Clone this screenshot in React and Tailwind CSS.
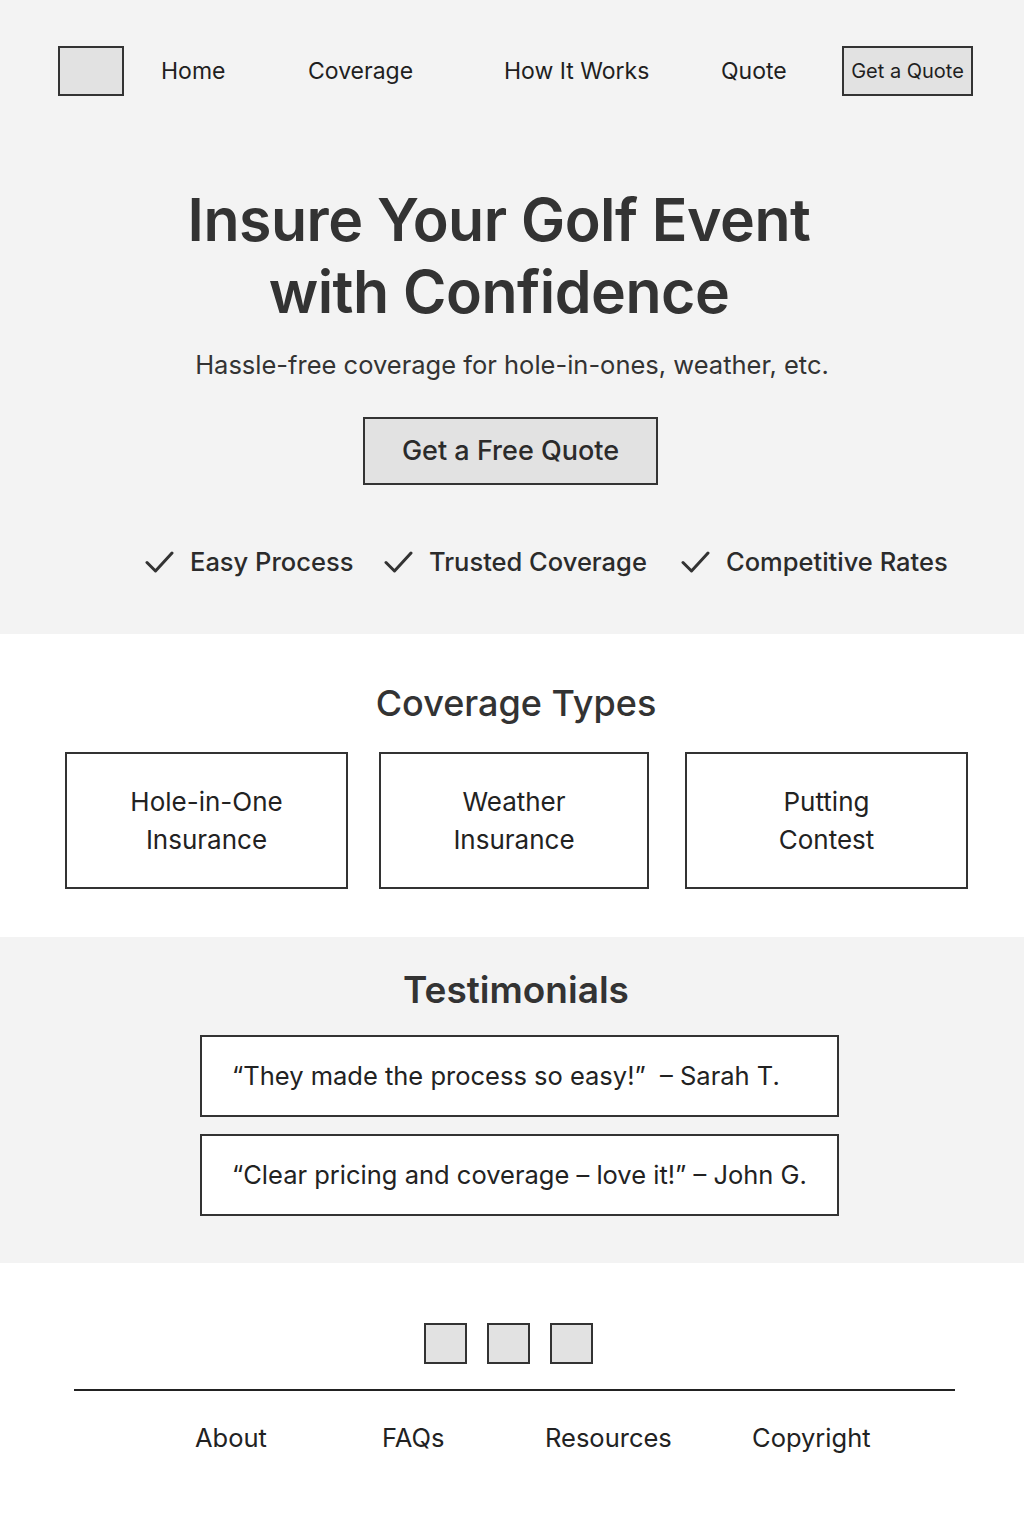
import React from 'react';

const NAV = [
  { label: 'Home', w: 'w-[147px]' },
  { label: 'Coverage', w: 'w-[196px]' },
  { label: 'How It Works', w: 'w-[217px]' },
  { label: 'Quote', w: 'w-[121px]' },
];

const PERKS = [
  ['Easy Process', 'w-[239px]'],
  ['Trusted Coverage', 'w-[297px]'],
  ['Competitive Rates', ''],
];

const Check = () => (
  <svg width="30" height="26" viewBox="0 0 30 26" fill="none" className="shrink-0">
    <path d="M2 13.5 L10.5 22 L27 4" stroke="#333" strokeWidth="3" strokeLinecap="round" strokeLinejoin="round" />
  </svg>
);

export default function App() {
  return (
    <div className="w-[1024px] min-h-[1536px] bg-white text-[#2b2b2b]" style={{ fontFamily: 'Inter, "Noto Sans", sans-serif' }}>
      {/* hero */}
      <section className="bg-[#f3f3f3] h-[634px] pt-[46px]">
        <nav className="flex items-center pl-[58px]">
          <div className="w-[66px] h-[50px] mr-[37px] bg-[#e2e2e2] border-2 border-[#333]" />
          {NAV.map(n => (
            <a key={n.label} className={`${n.w} text-[23px] text-[#1f1f1f] leading-none`}>{n.label}</a>
          ))}
          <button className="w-[131px] h-[50px] bg-[#e2e2e2] border-2 border-[#333] text-[20px] text-[#1f1f1f]">Get a Quote</button>
        </nav>

        <h1 className="mt-[88px] pr-[26px] text-center text-[59px] font-semibold leading-[72px] text-[#333] tracking-[-0.5px]">
          Insure Your Golf Event<br />with Confidence
        </h1>
        <p className="mt-[18px] text-center text-[25.5px] text-[#333]">Hassle-free coverage for hole-in-ones, weather, etc.</p>
        <div className="flex justify-center mt-[33px]">
          <button className="mr-[3px] w-[295px] h-[68px] bg-[#e2e2e2] border-2 border-[#333] text-[27px] font-medium text-[#2b2b2b]">Get a Free Quote</button>
        </div>
        <div className="flex items-center mt-[58px] pl-[145px]">
          {PERKS.map(([p, w]) => (
            <div key={p} className={`${w} flex items-center gap-[15px]`}>
              <Check />
              <span className="text-[25.5px] font-medium text-[#2b2b2b]">{p}</span>
            </div>
          ))}
        </div>
      </section>

      {/* coverage */}
      <section className="h-[303px] pt-[47px]">
        <h2 className="text-center text-[36px] font-medium text-[#333] leading-[44px] ml-[8px]">Coverage Types</h2>
        <div className="flex mt-[27px] pl-[65px]">
          {[
            ['Hole-in-One', 'Insurance', 'w-[283px]'],
            ['Weather', 'Insurance', 'w-[270px] ml-[31px]'],
            ['Putting', 'Contest', 'w-[283px] ml-[36px]'],
          ].map(([a, b, w]) => (
            <div key={a} className={`${w} h-[137px] border-2 border-[#333] flex flex-col items-center justify-center text-[26px] leading-[38px] text-[#222]`}>
              <span>{a}</span>
              <span>{b}</span>
            </div>
          ))}
        </div>
      </section>

      {/* testimonials */}
      <section className="bg-[#f3f3f3] h-[326px] pt-[30px]">
        <h2 className="text-center text-[37px] font-semibold text-[#333] leading-[46px] ml-[8px]">Testimonials</h2>
        <div className="flex flex-col gap-[17px] mt-[22px] ml-[200px] w-[639px]">
          <div className="h-[82px] bg-white border-2 border-[#333] flex items-center pl-[30px] text-[25.5px] text-[#222]">
            “They made the process so easy!” &nbsp;– Sarah T.
          </div>
          <div className="h-[82px] bg-white border-2 border-[#333] flex items-center pl-[30px] text-[25.5px] text-[#222]">
            “Clear pricing and coverage – love it!” – John G.
          </div>
        </div>
      </section>

      {/* footer */}
      <footer className="pt-[60px] pb-[80px]">
        <div className="flex justify-center gap-[20px] mr-[7px]">
          {[0, 1, 2].map(i => (
            <div key={i} className="w-[43px] h-[41px] bg-[#e2e2e2] border-2 border-[#333]" />
          ))}
        </div>
        <div className="mt-[25px] mx-[74px] w-[881px] h-[2px] bg-[#222]" />
        <div className="flex mt-[28px] pl-[195px] text-[25.5px] text-[#222]">
          <span className="w-[187px]">About</span>
          <span className="w-[163px]">FAQs</span>
          <span className="w-[207px]">Resources</span>
          <span>Copyright</span>
        </div>
      </footer>
    </div>
  );
}
